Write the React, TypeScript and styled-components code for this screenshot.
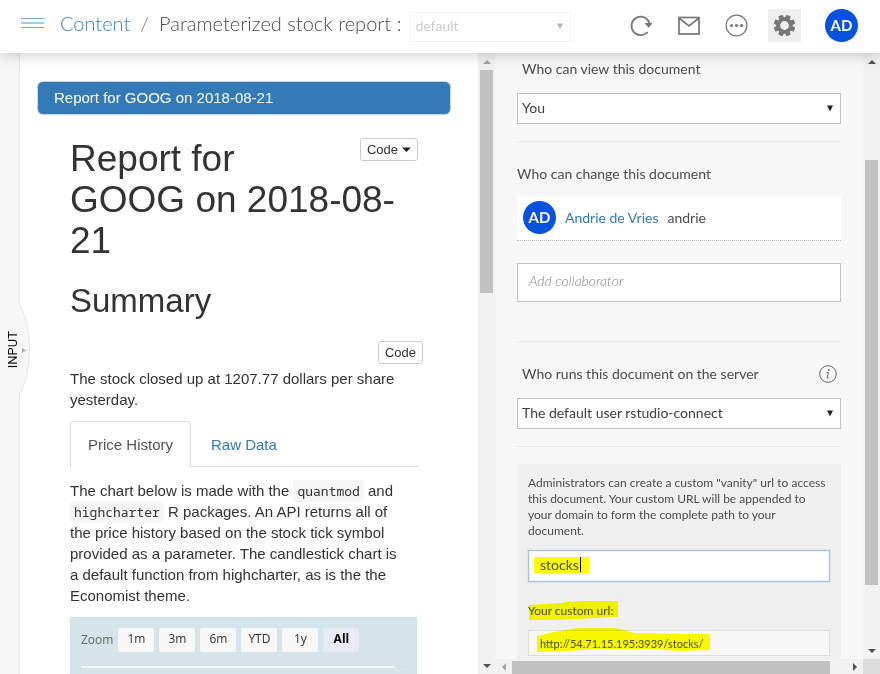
import React from "react";
import styled, { createGlobalStyle } from "styled-components";

const GlobalStyle = createGlobalStyle`
  * { box-sizing: border-box; }
  html, body { margin: 0; height: 100%; }
  #root { height: 100%; }
  body { background: #fff; color: #4c4c4c; font-family: Lato, "Open Sans", sans-serif; font-size: 14px; overflow: hidden; }
  button, input, select { font: inherit; color: inherit; margin: 0; border-radius: 0; }
  h1, h2, p { margin: 0; font-weight: 400; }
  a { text-decoration: none; }
`;

const Page = styled.div`
  display: flex;
  flex-direction: column;
  height: 100vh;
`;

const TopBar = styled.header`
  position: relative;
  z-index: 2;
  display: flex;
  align-items: center;
  flex: none;
  height: 53px;
  padding: 0 22px 3px 21px;
  background: #fff;
  box-shadow: 0 2px 14px rgba(0, 0, 0, 0.2);
`;

const Location = styled.div`
  display: flex;
  align-items: center;
  padding-bottom: 4px;
`;

const IconButton = styled.button<{ $active?: boolean }>`
  display: grid;
  place-items: center;
  width: 33px;
  height: 33px;
  padding: 0;
  border: 0;
  background: ${(p) => (p.$active ? "#eee" : "transparent")};
  svg { display: block; }
`;

const MenuButton = styled(IconButton)`
  width: 23px;
  margin-right: 16px;
`;

const Crumbs = styled.nav`
  display: flex;
  gap: 10px;
  font-size: 20px;
  font-weight: 300;
  line-height: 24px;
  white-space: nowrap;
  a { color: #4382b8; }
  i { color: #777; font-style: normal; }
`;

const Actions = styled.div`
  display: flex;
  gap: 15px;
  margin-left: auto;
  align-items: center;
`;

const Avatar = styled.span`
  display: grid;
  place-items: center;
  flex: none;
  width: 33px;
  height: 33px;
  border-radius: 50%;
  background: #0552dd;
  color: #fff;
  font-size: 15px;
  font-weight: 700;
  line-height: 20px;
`;

const AccountButton = styled.button`
  padding: 0;
  border: 0;
  margin-left: 9px;
  background: none;
`;

const SelectBox = styled.div<{ $muted?: boolean }>`
  display: grid;
  align-items: center;
  ${(p) => p.$muted && "width: 161px; margin: 3px 0 0 9px;"}
  select {
    grid-area: 1 / 1;
    appearance: none;
    width: 100%;
    height: ${(p) => (p.$muted ? 30 : 31)}px;
    padding: 0 24px 3px 4px;
    border: 1px solid ${(p) => (p.$muted ? "#f3f3f3" : "#c3c3c3")};
    background: #fff;
    opacity: 1;
    color: ${(p) => (p.$muted ? "#ccc" : "#404040")};
  }
  svg { grid-area: 1 / 1; justify-self: end; margin-right: 7px; pointer-events: none; }
`;

const Main = styled.main`
  display: flex;
  flex: 1;
  min-height: 0;
`;

const Rail = styled.aside`
  position: relative;
  flex: none;
  width: 20px;
  background: #f7f7f7;
  border-right: 1px solid #e8e8e8;
`;

const RailTab = styled.button`
  position: absolute;
  z-index: 1;
  top: 250px;
  left: 0;
  width: 31px;
  height: 92px;
  padding: 0;
  border: 0;
  background: none;
  svg { position: absolute; inset: 0; }
  span {
    position: absolute;
    top: 28px;
    left: 5px;
    writing-mode: vertical-rl;
    transform: rotate(180deg);
    font: 13px/16px Roboto, sans-serif;
    color: #111;
  }
`;

const Report = styled.section`
  flex: 1;
  min-width: 0;
  overflow: hidden;
  padding: 28px 27px 0 17px;
  color: #333;
  font: 15px/21px "Liberation Sans", Arial, sans-serif;
`;

const Banner = styled.div`
  height: 34px;
  padding: 5px 16px;
  border: 1px solid #c9d5df;
  border-radius: 6px;
  background: #337ab7;
  color: #fff;
`;

const Article = styled.article`
  padding: 22px 33px 0;
`;

const CodeButton = styled.button`
  display: inline-flex;
  align-items: center;
  gap: 4px;
  height: 23px;
  padding: 0 6px;
  border: 1px solid #ccc;
  border-radius: 3px;
  background: #fff;
  font-size: 13px;
  line-height: 18px;
`;

const TitleRow = styled.div`
  display: flex;
  align-items: flex-start;
  position: relative;
  ${CodeButton} { position: absolute; top: 1px; right: 0; }
`;

const Title = styled.h1`
  padding-top: 1px;
  font-size: 37px;
  line-height: 41px;
`;

const SectionTitle = styled.h1`
  margin-top: 21px;
  font-size: 33px;
  line-height: 37px;
`;

const CodeRow = styled.div`
  display: flex;
  justify-content: flex-end;
  margin: 22px -5px 4px 0;
`;

const Tabs = styled.div`
  display: flex;
  margin-top: 11px;
  border-bottom: 1px solid #ddd;
`;

const Tab = styled.button<{ $active?: boolean }>`
  height: 46px;
  margin: 0 2px -1px 0;
  padding: 0 17px;
  border: 1px solid ${(p) => (p.$active ? "#ddd" : "transparent")};
  border-bottom: 0;
  border-radius: 4px 4px 0 0;
  background: ${(p) => (p.$active ? "#fff" : "transparent")};
  color: ${(p) => (p.$active ? "#555" : "#337ab7")};
`;

const Paragraph = styled.p`
  margin-top: 13px;
  code {
    padding: 2px 4px;
    border-radius: 4px;
    background: #f5f5f5;
    font: 13px "Noto Sans Mono", "DejaVu Sans Mono", monospace;
  }
`;

const Chart = styled.div`
  margin: 11px 1px 0 0;
  height: 120px;
  padding: 11px 11px 0;
  background: #d5e4eb;
  font: 12px/18px "Open Sans", sans-serif;
`;

const Ranges = styled.div`
  display: flex;
  gap: 5px;
  align-items: center;
  span { color: #666; }
`;

const Range = styled.button<{ $active?: boolean }>`
  width: 36px;
  height: 24px;
  padding: 0 0 3px;
  border: 0;
  border-radius: 2px;
  background: ${(p) => (p.$active ? "#e6ebf5" : "#f7f7f7")};
  color: ${(p) => (p.$active ? "#000" : "#333")};
  font-weight: ${(p) => (p.$active ? 700 : 400)};
`;

const Navigator = styled.div`
  height: 2px;
  margin-top: 14px;
  background: linear-gradient(90deg, #f2f5f9 0 calc(100% - 11px), #d8dde4 calc(100% - 11px));
`;

const Scrollbar = styled.div`
  display: flex;
  flex-direction: column;
  align-items: center;
  flex: none;
  width: 17px;
  background: #f1f1f1;
`;

const Arrow = styled.span<{ $dir: "up" | "down" | "left" | "right"; $muted?: boolean }>`
  display: grid;
  place-items: center;
  flex: none;
  width: 17px;
  height: 17px;
  &::before {
    content: "";
    border: 4px solid transparent;
    ${(p) => ({
      up: "border-top: 0; border-bottom-color",
      down: "border-bottom: 0; border-top-color",
      left: "border-left: 0; border-right-color",
      right: "border-right: 0; border-left-color",
    })[p.$dir]}: ${(p) => (p.$muted ? "#a3a3a3" : "#505050")};
  }
`;

const Track = styled.div<{ $before: number; $thumb: number; $after: number }>`
  display: grid;
  flex: 1;
  width: 13px;
  grid-template-rows: ${(p) => `${p.$before}fr ${p.$thumb}fr ${p.$after}fr`};
  &::before { content: ""; grid-row: 2; background: #c1c1c1; }
`;

const HorizontalScrollbar = styled.div`
  display: flex;
  align-items: center;
  flex: none;
  height: 15px;
  background: #f1f1f1;
`;

const HorizontalTrack = styled.div`
  display: grid;
  flex: 1;
  height: 13px;
  margin-top: 2px;
  grid-template-columns: 319fr 16fr;
  &::before { content: ""; background: #c1c1c1; }
`;

const SettingsColumn = styled.div`
  display: flex;
  flex-direction: column;
  flex: none;
  width: 42%;
  min-width: 300px;
  max-width: 368px;
  background: #f7f7f7;
`;

const Settings = styled.form`
  flex: 1;
  min-height: 0;
  overflow: hidden;
  padding: 7px 22px 0;
`;

const Group = styled.section<{ $roomy?: boolean }>`
  padding: ${(p) => (p.$roomy ? "23px 0 39px" : "0 0 17px")};
  border-bottom: 1px solid #e9e9e9;
`;

const GroupLabel = styled.label<{ $inset?: boolean }>`
  display: block;
  padding-left: ${(p) => (p.$inset ? 5 : 0)}px;
  line-height: 18px;
`;

const LabelRow = styled.div<{ $top?: number }>`
  display: flex;
  align-items: center;
  justify-content: space-between;
  padding: ${(p) => p.$top ?? 0}px 4px 15px 0;
`;

const Person = styled.div`
  display: flex;
  align-items: center;
  gap: 9px;
  height: 44px;
  margin: 14px 0 22px;
  padding: 0 6px 3px;
  border-bottom: 1px dotted #bbb;
  background: #fff;
  a { color: #337ab7; }
`;

const TextInput = styled.input`
  display: block;
  width: 100%;
  height: 39px;
  padding: 0 11px 4px;
  border: 1px solid #c3c3c3;
  background: #fff;
  &::placeholder { color: #888; font-style: italic; opacity: 1; font-weight: 300; }
`;

const Vanity = styled.section`
  display: flex;
  flex-direction: column;
  margin-top: 17px;
  padding: 11px 11px 20px;
  background: #efefef;
  font-size: 12px;
  line-height: 16px;
`;

const Marked = styled.div<{ $top?: number }>`
  position: relative;
  margin-top: ${(p) => p.$top ?? 0}px;
  > svg {
    position: absolute;
    top: 0;
    left: 0;
    overflow: visible;
    mix-blend-mode: multiply;
    pointer-events: none;
  }
`;

const PathInput = styled(TextInput)`
  height: 32px;
  border: 1px solid #adc0d6;
  outline: 0;
  font-size: 14px;
  box-shadow: 0 0 0 1px #dde6f0, inset 0 0 0 1px #edf2f8;
`;

const Caret = styled.i`
  position: absolute;
  top: 7px;
  left: 52px;
  width: 1px;
  height: 15px;
  background: #000;
`;

const UrlInput = styled(TextInput)`
  height: 26px;
  padding: 0 11px;
  border-color: #ddd;
  background: #f7f7f7;
  font-size: 11px;
`;

const Corner = styled.div`
  width: 17px;
  height: 15px;
  background: #dcdcdc;
`;

const DropArrow = ({ color }: { color: string }) => (
  <svg width="8" height="7" viewBox="0 0 8 7"><path d="M1 0.5h6L4 6.5z" fill={color} /></svg>
);

const Gear = () => (
  <svg width="23" height="23" viewBox="-11.5 -11.5 23 23" fill="#777">
    <circle r="6.3" fill="none" stroke="#777" strokeWidth="3.8" />
    {[0, 45, 90, 135, 180, 225, 270, 315].map((a) => (
      <path key={a} d="M-2.7 -7.4 L-2.1 -10.8 H2.1 L2.7 -7.4z" transform={`rotate(${a + 22.5})`} />
    ))}
  </svg>
);

export default function App() {
  return (
    <Page>
      <GlobalStyle />
      <TopBar>
        <Location>
          <MenuButton aria-label="Menu">
            <svg width="23" height="12" viewBox="0 0 23 12"><path d="M0 1.5h23M0 10.5h23" stroke="#73a5d3" /><path d="M0 6h23" stroke="#a9c8e5" strokeWidth="2" /></svg>
          </MenuButton>
          <Crumbs>
            <a href="#content">Content</a>
            <i>/</i>
            <span>Parameterized stock report :</span>
          </Crumbs>
        </Location>
        <SelectBox $muted>
          <select disabled aria-label="Version"><option>default</option></select>
          <DropArrow color="#bbb" />
        </SelectBox>
        <Actions>
          <IconButton aria-label="Refresh">
            <svg width="23" height="23" viewBox="0 0 23 23" fill="none" stroke="#777" strokeWidth="1.8">
              <path d="M18.6 18A9.2 9.2 0 1 1 20.6 9.5" /><path d="M15.5 9h8l-3.8 4.8z" fill="#777" stroke="none" />
            </svg>
          </IconButton>
          <IconButton aria-label="Email">
            <svg width="22" height="19" viewBox="0 0 22 19" fill="none" stroke="#777" strokeWidth="1.7">
              <rect x="1" y="1.5" width="20" height="16.5" /><path d="M1 2l10 8 10-8" />
            </svg>
          </IconButton>
          <IconButton aria-label="More">
            <svg width="23" height="23" viewBox="0 0 23 23" fill="#777">
              <circle cx="11.5" cy="11.5" r="10.4" fill="none" stroke="#777" strokeWidth="1.2" />
              <circle cx="6.5" cy="11.5" r="1.6" /><circle cx="11.5" cy="11.5" r="1.6" /><circle cx="16.5" cy="11.5" r="1.6" />
            </svg>
          </IconButton>
          <IconButton aria-label="Settings" $active><Gear /></IconButton>
          <AccountButton aria-label="Account"><Avatar>AD</Avatar></AccountButton>
        </Actions>
      </TopBar>
      <Main>
        <Rail>
          <RailTab>
            <svg width="31" height="92" viewBox="0 0 31 92">
              <path d="M19 0C23 7 29.5 22 29.5 46S23 86 19 92z" fill="#f7f7f7" />
              <path d="M19 0C23 7 29.5 22 29.5 46S23 86 19 92" fill="none" stroke="#e6e6e6" />
              <path d="M22 45l4 2.5-4 2.5z" fill="#aaa" />
            </svg>
            <span>INPUT</span>
          </RailTab>
        </Rail>
        <Report>
          <Banner>Report for GOOG on 2018-08-21</Banner>
          <Article>
            <TitleRow>
              <Title>Report for<br />GOOG on 2018-08-<br />21</Title>
              <CodeButton>Code <svg width="9" height="5" viewBox="0 0 9 5"><path d="M0 0.5h9L4.5 5z" fill="#222" /></svg></CodeButton>
            </TitleRow>
            <SectionTitle>Summary</SectionTitle>
            <CodeRow><CodeButton>Code</CodeButton></CodeRow>
            <p>The stock closed up at 1207.77 dollars per share yesterday.</p>
            <Tabs role="tablist">
              <Tab role="tab" aria-selected $active>Price History</Tab>
              <Tab role="tab">Raw Data</Tab>
            </Tabs>
            <Paragraph>
              The chart below is made with the <code>quantmod</code> and<br />
              <code>highcharter</code> R packages. An API returns all of<br />
              the price history based on the stock tick symbol<br />
              provided as a parameter. The candlestick chart is<br />
              a default function from highcharter, as is the the<br />
              Economist theme.
            </Paragraph>
            <Chart>
              <Ranges>
                <span>Zoom</span>
                {["1m", "3m", "6m", "YTD", "1y", "All"].map((r) => (
                  <Range key={r} $active={r === "All"}>{r}</Range>
                ))}
              </Ranges>
              <Navigator />
            </Chart>
          </Article>
        </Report>
        <Scrollbar>
          <Arrow $dir="up" $muted />
          <Track $before={0} $thumb={223} $after={364} />
          <Arrow $dir="down" />
        </Scrollbar>
        <SettingsColumn>
          <Settings>
            <Group>
              <LabelRow>
                <GroupLabel $inset htmlFor="viewers">Who can view this document</GroupLabel>
              </LabelRow>
              <SelectBox>
                <select id="viewers"><option>You</option></select>
                <DropArrow color="#222" />
              </SelectBox>
            </Group>
            <Group $roomy>
              <GroupLabel htmlFor="collaborator">Who can change this document</GroupLabel>
              <Person>
                <Avatar>AD</Avatar>
                <a href="#andrie">Andrie de Vries</a>
                <span>andrie</span>
              </Person>
              <TextInput id="collaborator" placeholder="Add collaborator" />
            </Group>
            <Group>
              <LabelRow $top={23}>
                <GroupLabel $inset htmlFor="runner">Who runs this document on the server</GroupLabel>
                <svg width="18" height="18" viewBox="0 0 18 18" fill="none" stroke="#666">
                  <circle cx="9" cy="9" r="8.3" /><path d="M7.5 7.5h1.8L8.2 13h1.5" /><circle cx="9.8" cy="5" r="0.5" fill="#666" />
                </svg>
              </LabelRow>
              <SelectBox>
                <select id="runner"><option>The default user rstudio-connect</option></select>
                <DropArrow color="#222" />
              </SelectBox>
            </Group>
            <Vanity>
              <label htmlFor="path">Administrators can create a custom "vanity" url to access this document. Your custom URL will be appended to your domain to form the complete path to your document.</label>
              <Marked $top={11}>
                <PathInput id="path" defaultValue="stocks" />
                <svg width="62" height="24"><path d="M6 7h55v16H6z" fill="#ff0" /></svg>
                <Caret />
              </Marked>
              <Marked $top={21}>
                <label htmlFor="url">Your custom url:</label>
                <svg width="90" height="20"><path d="M1 2L17 1 35 0 36 -1 56 -2H90V14L49 16 30 17H1z" fill="#ff0" /></svg>
              </Marked>
              <Marked $top={11}>
                <UrlInput id="url" readOnly value="http://54.71.15.195:3939/stocks/" />
                <svg width="182" height="24"><path d="M9 6L25 2 51 -2H87L107 3 158 4H182V20L153 21 122 19H70L40 21 9 22z" fill="#ff0" /></svg>
              </Marked>
            </Vanity>
          </Settings>
          <HorizontalScrollbar>
            <Arrow $dir="left" $muted />
            <HorizontalTrack />
            <Arrow $dir="right" />
          </HorizontalScrollbar>
        </SettingsColumn>
        <Scrollbar>
          <Arrow $dir="up" />
          <Track $before={90} $thumb={425} $after={57} />
          <Arrow $dir="down" />
          <Corner />
        </Scrollbar>
      </Main>
    </Page>
  );
}
